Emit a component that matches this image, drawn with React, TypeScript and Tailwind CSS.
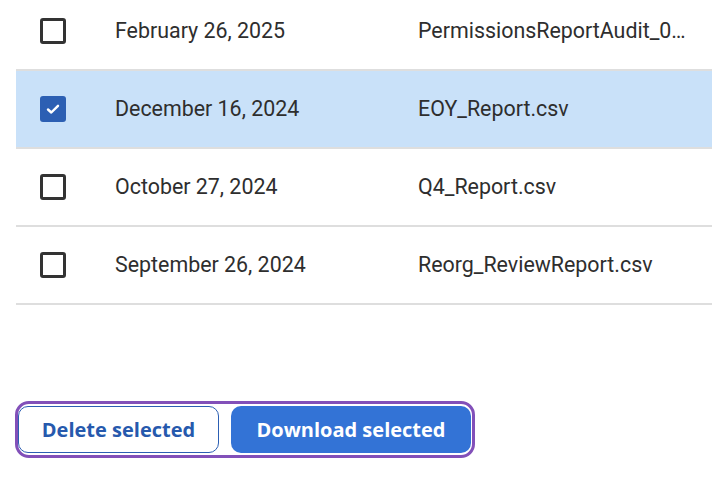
import React from "react";

const rows = [
  { date: "February 26, 2025", file: "PermissionsReportAudit_0…", checked: false },
  { date: "December 16, 2024", file: "EOY_Report.csv", checked: true },
  { date: "October 27, 2024", file: "Q4_Report.csv", checked: false },
  { date: "September 26, 2024", file: "Reorg_ReviewReport.csv", checked: false },
];

function Checkbox({ checked }: { checked: boolean }) {
  if (checked) {
    return (
      <div className="w-[26px] h-[26px] rounded-[3px] bg-[#2c5fb3] flex items-center justify-center">
        <svg width="18" height="18" viewBox="0 0 18 18" fill="none">
          <path d="M4 9.5 L7.3 12.5 L14 5.8" stroke="#ffffff" strokeWidth="2.4" strokeLinecap="round" strokeLinejoin="round" />
        </svg>
      </div>
    );
  }
  return <div className="w-[26px] h-[26px] rounded-[3px] border-[3px] border-[#333333] bg-white" />;
}

export default function App() {
  return (
    <div className="w-[712px] h-[482px] overflow-hidden bg-white" style={{ fontFamily: "Roboto, 'Noto Sans', sans-serif" }}>
      <div className="pl-[16px] mt-[-7px]">
        {rows.map((r) => (
          <div
            key={r.date}
            className={`flex items-center h-[78px] border-b-2 border-[#dedede] ${r.checked ? "bg-[#c9e1f9]" : "bg-white"}`}
          >
            <div className="w-[99px] pl-[24px] shrink-0 flex items-center">
              <Checkbox checked={r.checked} />
            </div>
            <div className="w-[303px] shrink-0 text-[21.4px] text-[#2e2e2e] whitespace-nowrap">{r.date}</div>
            <div className="flex-1 min-w-0 text-[21.4px] text-[#2e2e2e] whitespace-nowrap">{r.file}</div>
          </div>
        ))}
      </div>
      <div className="mt-[96px] ml-[15px] inline-flex items-center gap-[12px] border-[3px] border-[#8250b9] rounded-[14px] py-[2px] pr-[1px]">
        <button
          className="h-[47px] w-[201px] rounded-[10px] border border-[#2c5fb3] bg-white text-[#2659ad] text-[20px] font-bold"
          style={{ fontFamily: "'Open Sans', sans-serif" }}
        >
          Delete selected
        </button>
        <button
          className="h-[47px] w-[240px] rounded-[10px] bg-[#3373d6] text-white text-[20px] font-bold"
          style={{ fontFamily: "'Open Sans', sans-serif" }}
        >
          Download selected
        </button>
      </div>
    </div>
  );
}
